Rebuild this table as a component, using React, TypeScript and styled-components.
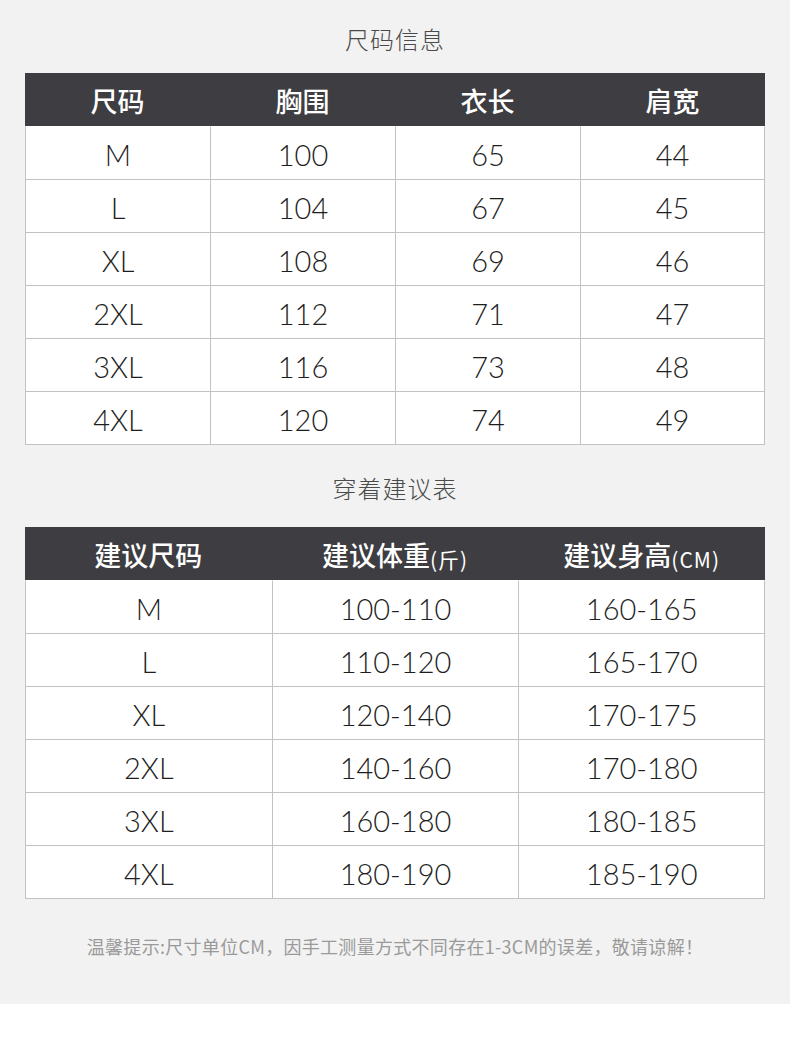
import React from 'react';
import styled, { createGlobalStyle } from 'styled-components';

const GlobalStyle = createGlobalStyle`
  html, body {
    margin: 0;
    padding: 0;
    background: #ffffff;
  }
`;

const Page = styled.div`
  width: 790px;
  height: 1004px;
  background: #f2f2f2;
  display: flex;
  flex-direction: column;
  align-items: center;
  font-family: "Noto Sans CJK SC", "Noto Sans", sans-serif;
`;

const Title = styled.div<{ $height: number }>`
  height: ${(p) => p.$height}px;
  display: flex;
  align-items: center;
  justify-content: center;
  padding-top: 3px;
  box-sizing: border-box;
  font-size: 24px;
  font-weight: 300;
  color: #4a4a4a;
  letter-spacing: 1px;
`;

const Table = styled.div<{ $cols: number }>`
  width: 740px;
  display: grid;
  grid-template-columns: repeat(${(p) => p.$cols}, 1fr);
  border-bottom: 1px solid #c2c2c2;
`;

const HeadCell = styled.div`
  height: 53px;
  background: #3e3d41;
  color: #ffffff;
  display: flex;
  align-items: center;
  justify-content: center;
  font-size: 27px;
  font-weight: 500;
  padding-top: 2px;
  box-sizing: border-box;
`;

const Unit = styled.span`
  font-size: 21px;
  font-weight: 400;
  margin-top: 8px;
  letter-spacing: 1px;
`;

const Cell = styled.div<{ $first: boolean; $last: boolean }>`
  height: 53px;
  box-sizing: border-box;
  padding-top: 2px;
  background: #ffffff;
  border-top: 1px solid #c2c2c2;
  border-left: 1px solid #c2c2c2;
  border-right: ${(p) => (p.$last ? '1px solid #c2c2c2' : 'none')};
  border-top-color: ${(p) => (p.$first ? 'transparent' : '#c2c2c2')};
  display: flex;
  align-items: center;
  justify-content: center;
  font-family: "Lato", "Liberation Sans", sans-serif;
  font-size: 29px;
  font-weight: 300;
  color: #1e1e1e;
`;

const Note = styled.div`
  height: 94px;
  display: flex;
  align-items: center;
  justify-content: center;
  font-size: 18px;
  color: #9a9a9a;
  letter-spacing: 0.3px;
`;

const sizeRows = [
  ['M', '100', '65', '44'],
  ['L', '104', '67', '45'],
  ['XL', '108', '69', '46'],
  ['2XL', '112', '71', '47'],
  ['3XL', '116', '73', '48'],
  ['4XL', '120', '74', '49'],
];

const adviceRows = [
  ['M', '100-110', '160-165'],
  ['L', '110-120', '165-170'],
  ['XL', '120-140', '170-175'],
  ['2XL', '140-160', '170-180'],
  ['3XL', '160-180', '180-185'],
  ['4XL', '180-190', '185-190'],
];

const DataTable = ({ head, rows }: { head: React.ReactNode[]; rows: string[][] }) => (
  <Table $cols={head.length}>
    {head.map((h, i) => (
      <HeadCell key={'h' + i}>{h}</HeadCell>
    ))}
    {rows.map((row, r) =>
      row.map((v, c) => (
        <Cell key={r + '-' + c} $first={r === 0} $last={c === row.length - 1}>
          {v}
        </Cell>
      ))
    )}
  </Table>
);

export default function App() {
  return (
    <>
      <GlobalStyle />
      <Page>
        <Title $height={73}>尺码信息</Title>
        <DataTable head={['尺码', '胸围', '衣长', '肩宽']} rows={sizeRows} />
        <Title $height={82}>穿着建议表</Title>
        <DataTable
          head={[
            '建议尺码',
            <>建议体重<Unit>(斤)</Unit></>,
            <>建议身高<Unit>(CM)</Unit></>,
          ]}
          rows={adviceRows}
        />
        <Note>温馨提示:尺寸单位CM，因手工测量方式不同存在1-3CM的误差，敬请谅解！</Note>
      </Page>
    </>
  );
}
